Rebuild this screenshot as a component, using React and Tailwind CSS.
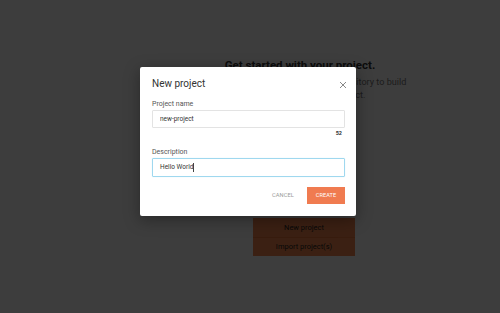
import React, { useState } from 'react';

const font = { fontFamily: 'Roboto, "Liberation Sans", sans-serif' };

const CloseIcon = () => (
  <svg width="8" height="8" viewBox="0 0 8 8" className="block">
    <path d="M1 1L7 7M7 1L1 7" stroke="#7a7a7a" strokeWidth="0.9" fill="none" />
  </svg>
);

const NewProjectDialog = () => {
  const [name, setName] = useState('new-project');
  const [description] = useState('Hello World');

  return (
    <div className="w-[216px] bg-white rounded-[2px] shadow-[0_4px_16px_rgba(0,0,0,0.35)] pl-[12px] pr-[11px] pt-[11px] pb-[12px]">
      {/* Header */}
      <div className="flex items-center justify-between h-[12px]">
        <h2 className="text-[10px] leading-[12px] text-[#333]">New project</h2>
        <button className="mr-[-2px] mt-[2px]">
          <CloseIcon />
        </button>
      </div>

      {/* Project name */}
      <label className="block mt-[10px] text-[7px] leading-[9px] text-[#555]">Project name</label>
      <input
        value={name}
        onChange={(e) => setName(e.target.value)}
        className="block mt-[1px] w-full h-[18px] border border-[#e3e3e3] rounded-[1px] px-[7px] text-[6.5px] text-[#333] outline-none"
      />
      <div className="mt-[2px] text-right pr-[3px] text-[5.5px] leading-[7px] font-bold text-[#333]">52</div>

      {/* Description */}
      <label className="block mt-[11px] text-[7px] leading-[9px] text-[#555]">Description</label>
      <div className="mt-[1px] h-[19px] border border-[#9fd8ef] rounded-[1px] shadow-[0_0_1px_#bfe6f5] flex items-center px-[7px]">
        <span className="text-[6.5px] text-[#333]">{description}</span>
        <span className="w-px h-[9px] bg-[#444]" />
      </div>

      {/* Actions */}
      <div className="mt-[10px] flex items-center justify-end gap-[13px]">
        <button className="text-[5.7px] text-[#9a9a9a] tracking-[0.1px]">CANCEL</button>
        <button className="h-[17px] w-[38px] bg-[#f07b50] text-white text-[5.6px] tracking-[0.1px]">CREATE</button>
      </div>
    </div>
  );
};

export default function App() {
  return (
    <div className="relative w-[500px] h-[313px] overflow-hidden bg-white" style={font}>
      {/* Page behind the dialog */}
      <div className="ml-[194px] w-[220px] pt-[58px] flex flex-col items-center text-center">
        <h1 className="pr-[8px] text-[11.5px] leading-[14px] font-bold text-[#333] whitespace-nowrap">
          Get started with your project.
        </h1>
        <p className="mt-[4px] text-[9.1px] leading-[13px] text-[#777] whitespace-nowrap">
          Create a new project or import a repository to build
          <br />
          and later manage your project.
        </p>
        <div className="mt-[116px] w-[102px] flex flex-col">
          <button className="h-[19px] bg-[#f7884f] text-[7.5px] text-[#222]">New project</button>
          <button className="h-[19px] bg-[#f7884f] text-[7.5px] text-[#222] border-t border-[#e8743c]">Import project(s)</button>
        </div>
      </div>

      {/* Modal overlay */}
      <div className="absolute inset-0 bg-black/[0.76] pt-[67px] pl-[140px]">
        <NewProjectDialog />
      </div>
    </div>
  );
}
